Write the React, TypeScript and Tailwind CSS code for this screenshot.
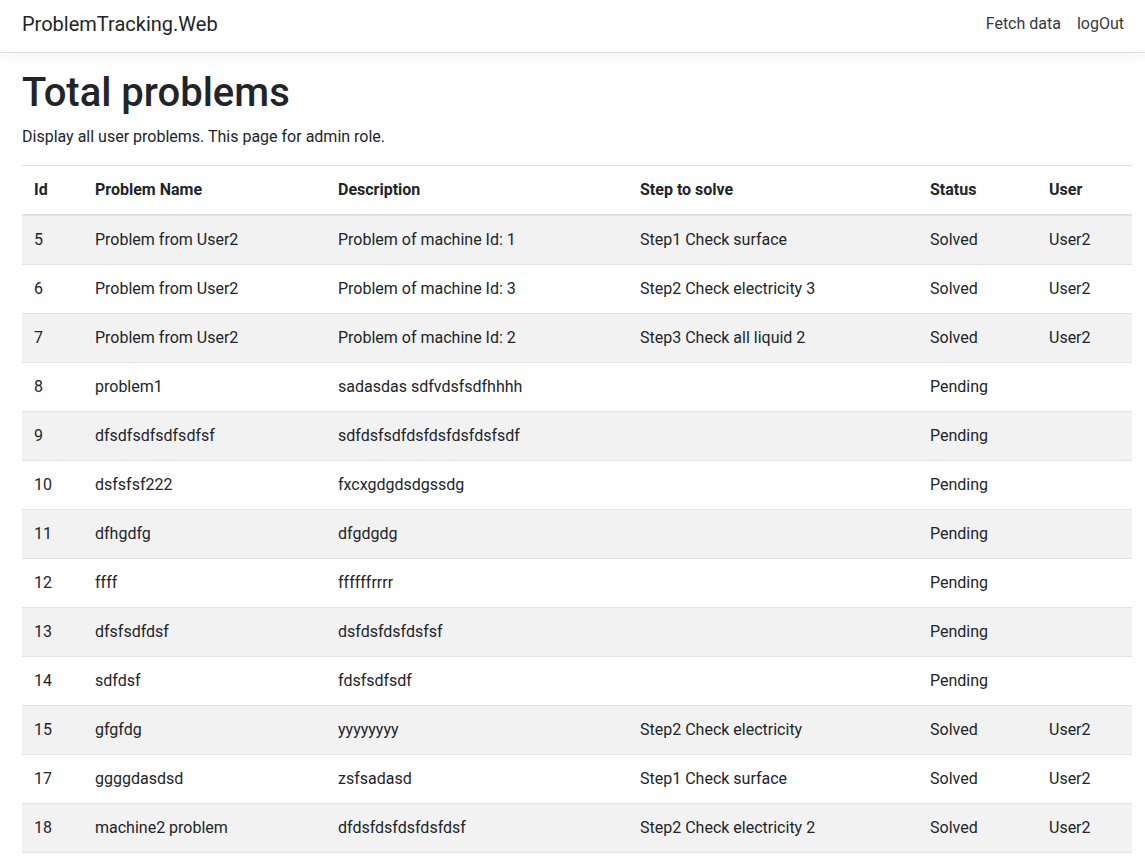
const problems = [
  { id: 5, name: "Problem from User2", description: "Problem of machine Id: 1", step: "Step1 Check surface", status: "Solved", user: "User2" },
  { id: 6, name: "Problem from User2", description: "Problem of machine Id: 3", step: "Step2 Check electricity 3", status: "Solved", user: "User2" },
  { id: 7, name: "Problem from User2", description: "Problem of machine Id: 2", step: "Step3 Check all liquid 2", status: "Solved", user: "User2" },
  { id: 8, name: "problem1", description: "sadasdas sdfvdsfsdfhhhh", step: "", status: "Pending", user: "" },
  { id: 9, name: "dfsdfsdfsdfsdfsf", description: "sdfdsfsdfdsfdsfdsfdsfsdf", step: "", status: "Pending", user: "" },
  { id: 10, name: "dsfsfsf222", description: "fxcxgdgdsdgssdg", step: "", status: "Pending", user: "" },
  { id: 11, name: "dfhgdfg", description: "dfgdgdg", step: "", status: "Pending", user: "" },
  { id: 12, name: "ffff", description: "ffffffrrrr", step: "", status: "Pending", user: "" },
  { id: 13, name: "dfsfsdfdsf", description: "dsfdsfdsfdsfsf", step: "", status: "Pending", user: "" },
  { id: 14, name: "sdfdsf", description: "fdsfsdfsdf", step: "", status: "Pending", user: "" },
  { id: 15, name: "gfgfdg", description: "yyyyyyyy", step: "Step2 Check electricity", status: "Solved", user: "User2" },
  { id: 17, name: "ggggdasdsd", description: "zsfsadasd", step: "Step1 Check surface", status: "Solved", user: "User2" },
  { id: 18, name: "machine2 problem", description: "dfdsfdsfdsfdsfdsf", step: "Step2 Check electricity 2", status: "Solved", user: "User2" },
]

const columns = [
  { label: "Id", width: "w-[61px]" },
  { label: "Problem Name", width: "w-[243px]" },
  { label: "Description", width: "w-[302px]" },
  { label: "Step to solve", width: "w-[290px]" },
  { label: "Status", width: "w-[119px]" },
  { label: "User", width: "w-[95px]" },
]

export default function App() {
  return (
    <div className="min-h-screen bg-white text-[#212529] font-['Roboto','Liberation_Sans',sans-serif] text-base">
      <header className="h-[53px] pb-1 border-b border-[#dee2e6] bg-white shadow-[0_4px_12px_rgba(0,0,0,0.05)] flex items-center justify-between pl-[22px] pr-[13px]">
        <a className="text-xl leading-[30px] text-[#212529]">ProblemTracking.Web</a>
        <nav className="flex items-center">
          <a className="px-2 text-[#343a40] leading-6">Fetch data</a>
          <a className="px-2 text-[#343a40] leading-6">logOut</a>
        </nav>
      </header>

      <main className="px-[22px] pt-4">
        <h1 className="text-[40px] leading-[48px] font-medium mb-2">Total problems</h1>
        <p className="leading-6 mb-4">Display all user problems. This page for admin role.</p>

        <table className="w-[1110px] border-collapse table-fixed">
          <thead>
            <tr className="border-t border-[#dee2e6]">
              {columns.map((col) => (
                <th
                  key={col.label}
                  className={`${col.width} px-3 py-3 text-left font-bold leading-6 border-b-2 border-[#dee2e6]`}
                >
                  {col.label}
                </th>
              ))}
            </tr>
          </thead>
          <tbody>
            {problems.map((p, index) => (
              <tr key={p.id} className={index % 2 === 0 ? "bg-[#f2f2f2]" : "bg-white"}>
                <td className="px-3 py-3 leading-6 border-b border-[#dee2e6]">{p.id}</td>
                <td className="px-3 py-3 leading-6 border-b border-[#dee2e6]">{p.name}</td>
                <td className="px-3 py-3 leading-6 border-b border-[#dee2e6]">{p.description}</td>
                <td className="px-3 py-3 leading-6 border-b border-[#dee2e6]">{p.step}</td>
                <td className="px-3 py-3 leading-6 border-b border-[#dee2e6]">{p.status}</td>
                <td className="px-3 py-3 leading-6 border-b border-[#dee2e6]">{p.user}</td>
              </tr>
            ))}
          </tbody>
        </table>
      </main>
    </div>
  )
}
